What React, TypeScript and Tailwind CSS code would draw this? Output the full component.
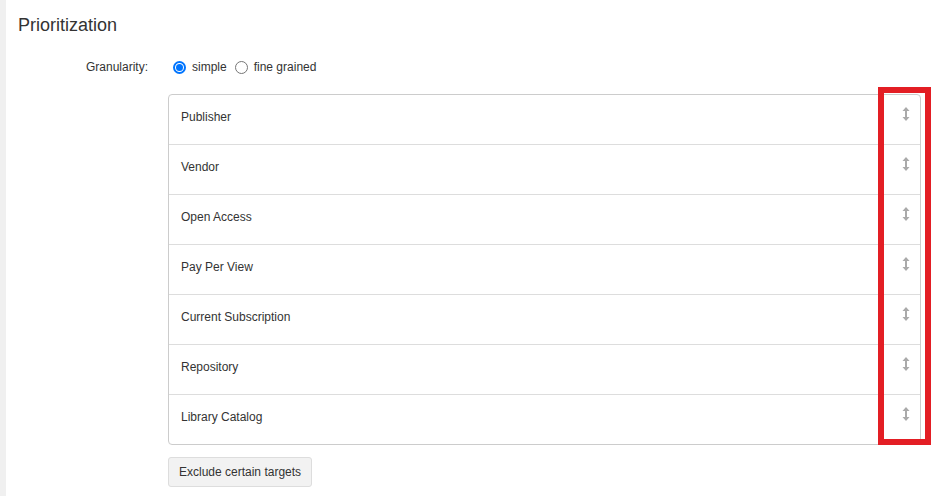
const rows = [
  "Publisher",
  "Vendor",
  "Open Access",
  "Pay Per View",
  "Current Subscription",
  "Repository",
  "Library Catalog",
];

function ResizeIcon() {
  return (
    <svg width="8" height="14" viewBox="0 0 8 14" className="text-[#aaa] mt-[12px]">
      <path d="M4 0 L7.5 4 H5 V10 H7.5 L4 14 L0.5 10 H3 V4 H0.5 Z" fill="currentColor" />
    </svg>
  );
}

function Radio({ checked }: { checked?: boolean }) {
  return (
    <span
      className={
        checked
          ? "w-[13px] h-[13px] rounded-full border-2 border-[#0075ff] flex items-center justify-center"
          : "w-[13px] h-[13px] rounded-full border border-[#767676] bg-white"
      }
    >
      {checked && <span className="w-[7px] h-[7px] rounded-full bg-[#0075ff]"></span>}
    </span>
  );
}

export default function App() {
  return (
    <div
      className="relative w-[931px] h-[496px] bg-white flex overflow-hidden text-[#333]"
      style={{ fontFamily: '"Liberation Sans", Arial, sans-serif' }}
    >
      <div className="w-[6px] bg-[#f0f0f0] shrink-0"></div>
      <div className="flex-1 pl-[12px] pt-[13px]">
        <h2 className="text-[18px] leading-[24px] text-[#333]">Prioritization</h2>
        <div className="flex items-center mt-[23px] h-[14px] text-[12px]">
          <div className="w-[150px] text-right pr-[20px]">Granularity:</div>
          <label className="flex items-center ml-[5px] gap-[6px]">
            <Radio checked />
            <span>simple</span>
          </label>
          <label className="flex items-center ml-[8px] gap-[6px]">
            <Radio />
            <span>fine grained</span>
          </label>
        </div>
        <div className="ml-[150px] mt-[20px] w-[753px] border border-[#ccc] rounded-[4px]">
          {rows.map((r, i) => (
            <div
              key={r}
              className={
                "flex items-start justify-between pl-[12px] pr-[10px] text-[12px] leading-[17px] " +
                (i > 0 ? "h-[50px] border-t border-[#ddd]" : "h-[49px]")
              }
            >
              <span className="pt-[14px]">{r}</span>
              <ResizeIcon />
            </div>
          ))}
        </div>
        <button className="ml-[150px] mt-[12px] h-[30px] px-[10px] text-[12px] text-[#333] bg-[#f2f2f2] border border-[#ddd] rounded-[3px]">
          Exclude certain targets
        </button>
      </div>
      <div className="absolute left-[878px] top-[87px] w-[53px] h-[358px] border-[6px] border-[#e31e24]"></div>
    </div>
  );
}
